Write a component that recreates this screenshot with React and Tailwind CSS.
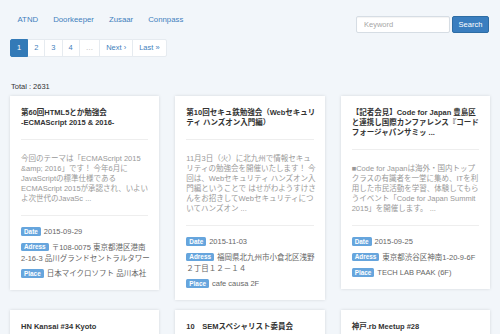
import React from "react"

const SITES = ["ATND", "Doorkeeper", "Zusaar", "Connpass"]

const PAGES = [
  { label: "1", active: true },
  { label: "2" },
  { label: "3" },
  { label: "4" },
  { label: "…", muted: true },
  { label: "Next ›" },
  { label: "Last »" },
]

const EVENTS = [
  {
    id: 1,
    title: ["第60回HTML5とか勉強会", "-ECMAScript 2015 & 2016-"],
    desc: [
      "今回のテーマは「ECMAScript 2015",
      "&amp; 2016」です！ 今年6月に",
      "JavaScriptの標準仕様である",
      "ECMAScript 2015が承認され、いよい",
      "よ次世代のJavaSc ...",
    ],
    date: "2015-09-29",
    address: ["〒108-0075 東京都港区港南", "2-16-3 品川グランドセントラルタワー"],
    place: "日本マイクロソフト 品川本社",
  },
  {
    id: 2,
    title: ["第10回セキュ鉄勉強会（Webセキュリ", "ティ ハンズオン入門編）"],
    desc: [
      "11月3日（火）に北九州で情報セキュ",
      "リティの勉強会を開催いたします！ 今",
      "回は、Webセキュリティ ハンズオン入",
      "門編ということで はせがわようすけさ",
      "んをお招きしてWebセキュリティにつ",
      "いてハンズオン ...",
    ],
    date: "2015-11-03",
    address: ["福岡県北九州市小倉北区浅野", "２丁目１２－１４"],
    place: "cafe causa 2F",
  },
  {
    id: 3,
    title: [
      "【記者会見】Code for Japan 豊島区",
      "と連携し国際カンファレンス『コード",
      "フォージャパンサミッ ...",
    ],
    desc: [
      "■Code for Japanは海外・国内トップ",
      "クラスの有識者を一堂に集め、ITを利",
      "用した市民活動を学習、体験してもら",
      "うイベント「Code for Japan Summit",
      "2015」を開催します。 ...",
    ],
    date: "2015-09-25",
    address: ["東京都渋谷区神南1-20-9-6F"],
    place: "TECH LAB PAAK (6F)",
  },
  { id: 4, title: ["HN Kansai #34 Kyoto"], desc: ["HN Kansai の勉強会です。"], date: "2015-10-03", address: ["京都府京都市"], place: "京都" },
  { id: 5, title: ["10　SEMスペシャリスト委員会"], desc: ["SEMスペシャリスト委員会の定例会です。"], date: "2015-10-05", address: ["東京都"], place: "東京" },
  { id: 6, title: ["神戸.rb Meetup #28"], desc: ["神戸.rb のミートアップです。"], date: "2015-10-08", address: ["兵庫県神戸市"], place: "神戸" },
]

function Lines({ lines }) {
  return lines.map((line, i) => (
    <span key={i} className="block whitespace-nowrap">{line}</span>
  ))
}

function Label({ children }) {
  return (
    <span className="inline-block align-[0.5px] rounded-[1.5px] bg-[#66a5dd] px-[3px] pt-[1.2px] pb-[1.3px] text-[6.4px] leading-[6px] font-semibold text-white mr-[3px]">
      {children}
    </span>
  )
}

function EventCard({ event }) {
  return (
    <div className="bg-white shadow-[0_0_3px_rgba(0,0,0,0.13)] pt-[12px] px-[11px] pb-[11px]">
      <h5 className="font-bold text-[#333] leading-[10px]">
        <Lines lines={event.title} />
      </h5>
      <hr className="mt-[11px] border-t border-[#eee]" />
      <div className="mt-[13.5px] text-[#999] leading-[10px]">
        <Lines lines={event.desc} />
      </div>
      <hr className="mt-[11px] border-t border-[#eee]" />
      <div className="mt-[10.5px] text-[#666] leading-[11px]">
        <div className="mb-[4.5px] whitespace-nowrap">
          <Label>Date</Label>{event.date}
        </div>
        <div className="mb-[4.5px] whitespace-nowrap">
          <Label>Adress</Label>{event.address[0]}
          {event.address[1] && <span className="block">{event.address[1]}</span>}
        </div>
        <div className="whitespace-nowrap">
          <Label>Place</Label>{event.place}
        </div>
      </div>
    </div>
  )
}

export default function App() {
  return (
    <div className="min-h-screen bg-[#f2f6fa] px-[10px] pb-6 text-[7.5px] font-['Liberation_Sans','Noto_Sans_CJK_JP',sans-serif]">
      {/* Header */}
      <div className="flex items-start justify-between">
        <ul className="flex pt-[14px]">
          {SITES.map(site => (
            <li key={site}>
              <a className="block px-[7.5px] leading-[12px] text-[7.8px] text-[#3f7fbd]">{site}</a>
            </li>
          ))}
        </ul>
        <form className="flex gap-[2px] pt-[16px] pr-[1px]">
          <input
            placeholder="Keyword"
            className="h-[17px] w-[94px] rounded-[2px] border border-[#d6dde4] bg-white px-[7px] text-[7.5px] placeholder:text-[#a6a6a6] shadow-[inset_0_1px_1px_rgba(0,0,0,0.05)]"
          />
          <button
            type="button"
            className="h-[17px] w-[37px] rounded-[2px] border border-[#2e6da4] bg-[#3a7ebf] text-[7.5px] text-white"
          >
            Search
          </button>
        </form>
      </div>

      {/* Pagination */}
      <ul className="mt-[6px] ml-px flex">
        {PAGES.map((page, i) => (
          <li key={page.label}>
            <a
              className={`-ml-px flex h-[18px] items-center border px-[6px] ${
                i === 0 ? "rounded-l-[2px]" : ""
              } ${i === PAGES.length - 1 ? "rounded-r-[2px]" : ""} ${
                page.active
                  ? "relative border-[#337ab7] bg-[#337ab7] text-white"
                  : page.muted
                  ? "border-[#e6ebf0] bg-white text-[#aaa]"
                  : "border-[#e6ebf0] bg-white text-[#3f7fbd]"
              }`}
            >
              {page.label}
            </a>
          </li>
        ))}
      </ul>

      <p className="mt-[24px] ml-px leading-[11px] text-[#333]">Total : 2631</p>

      {/* Events */}
      <div className="mt-[4px] grid grid-cols-3 items-start gap-x-[16px] gap-y-[10px]">
        {EVENTS.map(event => (
          <EventCard key={event.id} event={event} />
        ))}
      </div>
    </div>
  )
}
